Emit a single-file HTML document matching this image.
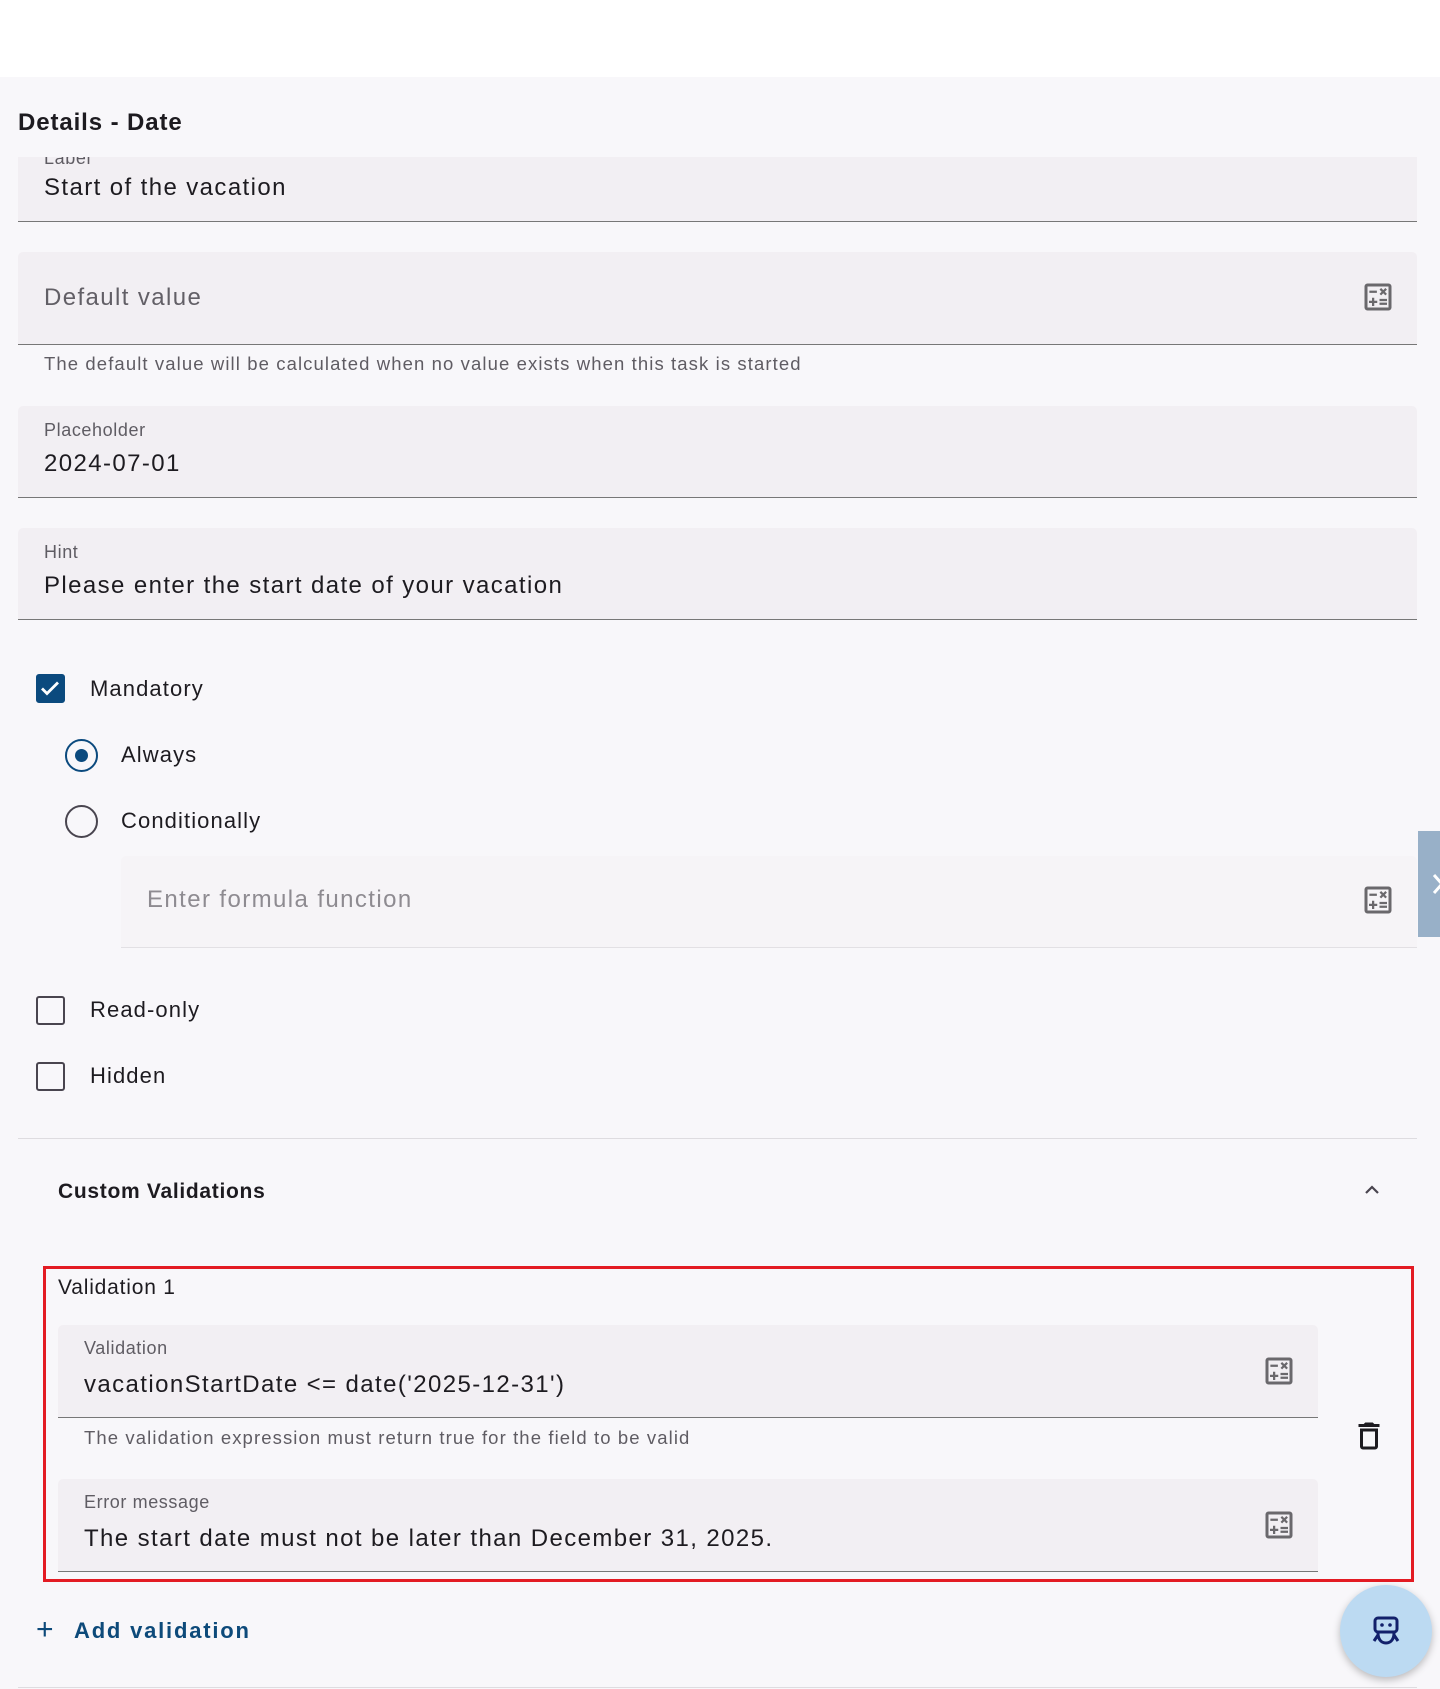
<!DOCTYPE html>
<html><head><meta charset="utf-8"><style>
*{box-sizing:border-box;margin:0;padding:0}
body{width:1440px;height:1689px;background:#f8f7fa;font-family:"Liberation Sans",Arial,sans-serif;color:#1d1b20;position:relative;overflow:hidden}
.a{position:absolute}
.top{left:0;top:0;width:1440px;height:77px;background:#fff}
.f{position:absolute;background:#f2eff3;border-bottom:1px solid #777;border-radius:5px 5px 0 0}
.lbl{position:absolute;font-size:18px;color:#5f5c63;left:26px;letter-spacing:.6px}
.val{position:absolute;font-size:24px;color:#1d1b20;left:26px;letter-spacing:1.4px}
.hint{font-size:18.5px;color:#5f5c63;letter-spacing:1.1px}
.ico{position:absolute;width:36px;height:36px}
.cb{position:absolute;width:29px;height:29px;border:2.5px solid #49454f;border-radius:3px}
.t{font-size:22px;color:#1d1b20;letter-spacing:1.1px}
.rad{position:absolute;width:33px;height:33px;border:2.5px solid #49454f;border-radius:50%}
</style></head><body>
<div class="a top"></div>
<div class="a" style="left:18px;top:109px;font-size:24px;font-weight:bold;color:#1d1b20;letter-spacing:.9px">Details - Date</div>

<div class="f" style="left:18px;top:157px;width:1399px;height:65px;border-radius:0;overflow:hidden"><div class="lbl" style="top:-9px">Label</div><div class="val" style="top:17px">Start of the vacation</div></div>

<div class="f" style="left:18px;top:252px;width:1399px;height:93px"><div class="val" style="top:32px;color:#625f66">Default value</div>
<svg class="ico" style="left:1342px;top:27px" viewBox="0 0 24 24"><path fill="#6a686c" d="M19 3H5a2 2 0 0 0-2 2v14a2 2 0 0 0 2 2h14a2 2 0 0 0 2-2V5a2 2 0 0 0-2-2zm0 16H5V5h14v14zM6.25 7.72h5v1.5h-5zM13 15.75h5v1.5h-5zm0-2.5h5v1.5h-5zM8 18h1.5v-2h2v-1.5h-2v-2H8v2H6V16h2zm6.09-7.05 1.41-1.41 1.41 1.41 1.06-1.06-1.41-1.42 1.41-1.41L16.91 6 15.5 7.41 14.09 6l-1.06 1.06 1.41 1.41-1.41 1.42z"/></svg></div>
<div class="a hint" style="left:44px;top:353px">The default value will be calculated when no value exists when this task is started</div>

<div class="f" style="left:18px;top:406px;width:1399px;height:92px"><div class="lbl" style="top:14px">Placeholder</div><div class="val" style="top:44px">2024-07-01</div></div>
<div class="f" style="left:18px;top:528px;width:1399px;height:92px"><div class="lbl" style="top:14px">Hint</div><div class="val" style="top:44px">Please enter the start date of your vacation</div></div>

<div class="cb" style="left:36px;top:674px;background:#0b4a7e;border-color:#0b4a7e"><svg viewBox="0 0 24 24" width="24" height="24" style="position:absolute;left:0;top:0"><path d="M4 12.5l5 5L20 6.5" stroke="#fff" stroke-width="2.8" fill="none"/></svg></div>
<div class="a t" style="left:90px;top:676px">Mandatory</div>
<div class="rad" style="left:65px;top:739px;border-color:#0b4a7e"><div style="position:absolute;left:7.5px;top:7.5px;width:13px;height:13px;border-radius:50%;background:#0b4a7e"></div></div>
<div class="a t" style="left:121px;top:742px">Always</div>
<div class="rad" style="left:65px;top:805px"></div>
<div class="a t" style="left:121px;top:808px">Conditionally</div>

<div class="f" style="left:121px;top:856px;width:1296px;height:92px;border-bottom-color:#e2e0e4;background:#f6f4f7"><div class="val" style="top:30px;color:#8e8b91">Enter formula function</div>
<svg class="ico" style="left:1239px;top:26px" viewBox="0 0 24 24"><path fill="#6a686c" d="M19 3H5a2 2 0 0 0-2 2v14a2 2 0 0 0 2 2h14a2 2 0 0 0 2-2V5a2 2 0 0 0-2-2zm0 16H5V5h14v14zM6.25 7.72h5v1.5h-5zM13 15.75h5v1.5h-5zm0-2.5h5v1.5h-5zM8 18h1.5v-2h2v-1.5h-2v-2H8v2H6V16h2zm6.09-7.05 1.41-1.41 1.41 1.41 1.06-1.06-1.41-1.42 1.41-1.41L16.91 6 15.5 7.41 14.09 6l-1.06 1.06 1.41 1.41-1.41 1.42z"/></svg></div>
<div class="a" style="left:1418px;top:831px;width:22px;height:106px;background:#98b0c8"><svg style="position:absolute;left:14px;top:42px" width="12" height="22" viewBox="0 0 12 22"><path d="M2 2l8 9-8 9" stroke="#fff" stroke-width="3" fill="none"/></svg></div>

<div class="cb" style="left:36px;top:996px"></div><div class="a t" style="left:90px;top:997px">Read-only</div>
<div class="cb" style="left:36px;top:1062px"></div><div class="a t" style="left:90px;top:1063px">Hidden</div>

<div class="a" style="left:18px;top:1138px;width:1399px;height:1px;background:#dedce0"></div>
<div class="a" style="left:58px;top:1180px;font-size:21px;font-weight:bold;letter-spacing:.7px">Custom Validations</div>
<svg class="a" style="left:1360px;top:1178px" width="24" height="24" viewBox="0 0 24 24"><path d="M6 15l6-6 6 6" stroke="#49454f" stroke-width="2.2" fill="none"/></svg>

<div class="a" style="left:43px;top:1266px;width:1371px;height:316px;border:3px solid #e31b23"></div>
<div class="a" style="left:58px;top:1276px;font-size:21px;letter-spacing:.8px">Validation 1</div>
<div class="f" style="left:58px;top:1325px;width:1260px;height:93px"><div class="lbl" style="top:13px">Validation</div><div class="val" style="top:46px">vacationStartDate &lt;= date('2025-12-31')</div>
<svg class="ico" style="left:1203px;top:28px" viewBox="0 0 24 24"><path fill="#6a686c" d="M19 3H5a2 2 0 0 0-2 2v14a2 2 0 0 0 2 2h14a2 2 0 0 0 2-2V5a2 2 0 0 0-2-2zm0 16H5V5h14v14zM6.25 7.72h5v1.5h-5zM13 15.75h5v1.5h-5zm0-2.5h5v1.5h-5zM8 18h1.5v-2h2v-1.5h-2v-2H8v2H6V16h2zm6.09-7.05 1.41-1.41 1.41 1.41 1.06-1.06-1.41-1.42 1.41-1.41L16.91 6 15.5 7.41 14.09 6l-1.06 1.06 1.41 1.41-1.41 1.42z"/></svg></div>
<div class="a hint" style="left:84px;top:1427px">The validation expression must return true for the field to be valid</div>
<svg class="a" style="left:1351px;top:1417px" width="36" height="38" viewBox="0 0 24 24"><path fill="#1d1b20" d="M6 19a2 2 0 0 0 2 2h8a2 2 0 0 0 2-2V7H6v12zM8 9h8v10H8V9zm7.5-5-1-1h-5l-1 1H5v2h14V4z"/></svg>
<div class="f" style="left:58px;top:1479px;width:1260px;height:93px"><div class="lbl" style="top:13px">Error message</div><div class="val" style="top:46px">The start date must not be later than December 31, 2025.</div>
<svg class="ico" style="left:1203px;top:28px" viewBox="0 0 24 24"><path fill="#6a686c" d="M19 3H5a2 2 0 0 0-2 2v14a2 2 0 0 0 2 2h14a2 2 0 0 0 2-2V5a2 2 0 0 0-2-2zm0 16H5V5h14v14zM6.25 7.72h5v1.5h-5zM13 15.75h5v1.5h-5zm0-2.5h5v1.5h-5zM8 18h1.5v-2h2v-1.5h-2v-2H8v2H6V16h2zm6.09-7.05 1.41-1.41 1.41 1.41 1.06-1.06-1.41-1.42 1.41-1.41L16.91 6 15.5 7.41 14.09 6l-1.06 1.06 1.41 1.41-1.41 1.42z"/></svg></div>

<div class="a" style="left:36px;top:1615px;font-size:30px;color:#0d4a7a;line-height:30px">+</div>
<div class="a" style="left:74px;top:1618px;font-size:22px;color:#0d4a7a;font-weight:bold;letter-spacing:1.8px">Add validation</div>
<div class="a" style="left:18px;top:1687px;width:1399px;height:1px;background:#dedce0"></div>

<div class="a" style="left:1340px;top:1585px;width:92px;height:92px;border-radius:50%;background:#bcdaf2;box-shadow:0 3px 8px rgba(0,0,0,.25)">
<svg style="position:absolute;left:26px;top:26px" width="40" height="40" viewBox="0 0 40 40"><path d="M12 7h16a3 3 0 0 1 3 3v8a3 3 0 0 1-3 3H12a3 3 0 0 1-3-3v-8a3 3 0 0 1 3-3z" stroke="#12206b" stroke-width="3" fill="none"/><circle cx="16" cy="14" r="1.8" fill="#12206b"/><circle cx="24" cy="14" r="1.8" fill="#12206b"/><path d="M12 22c0 6 3 10 8 10s8-4 8-10M12 24l-4 6M28 24l4 6" stroke="#12206b" stroke-width="3" fill="none"/></svg></div>
</body></html>
